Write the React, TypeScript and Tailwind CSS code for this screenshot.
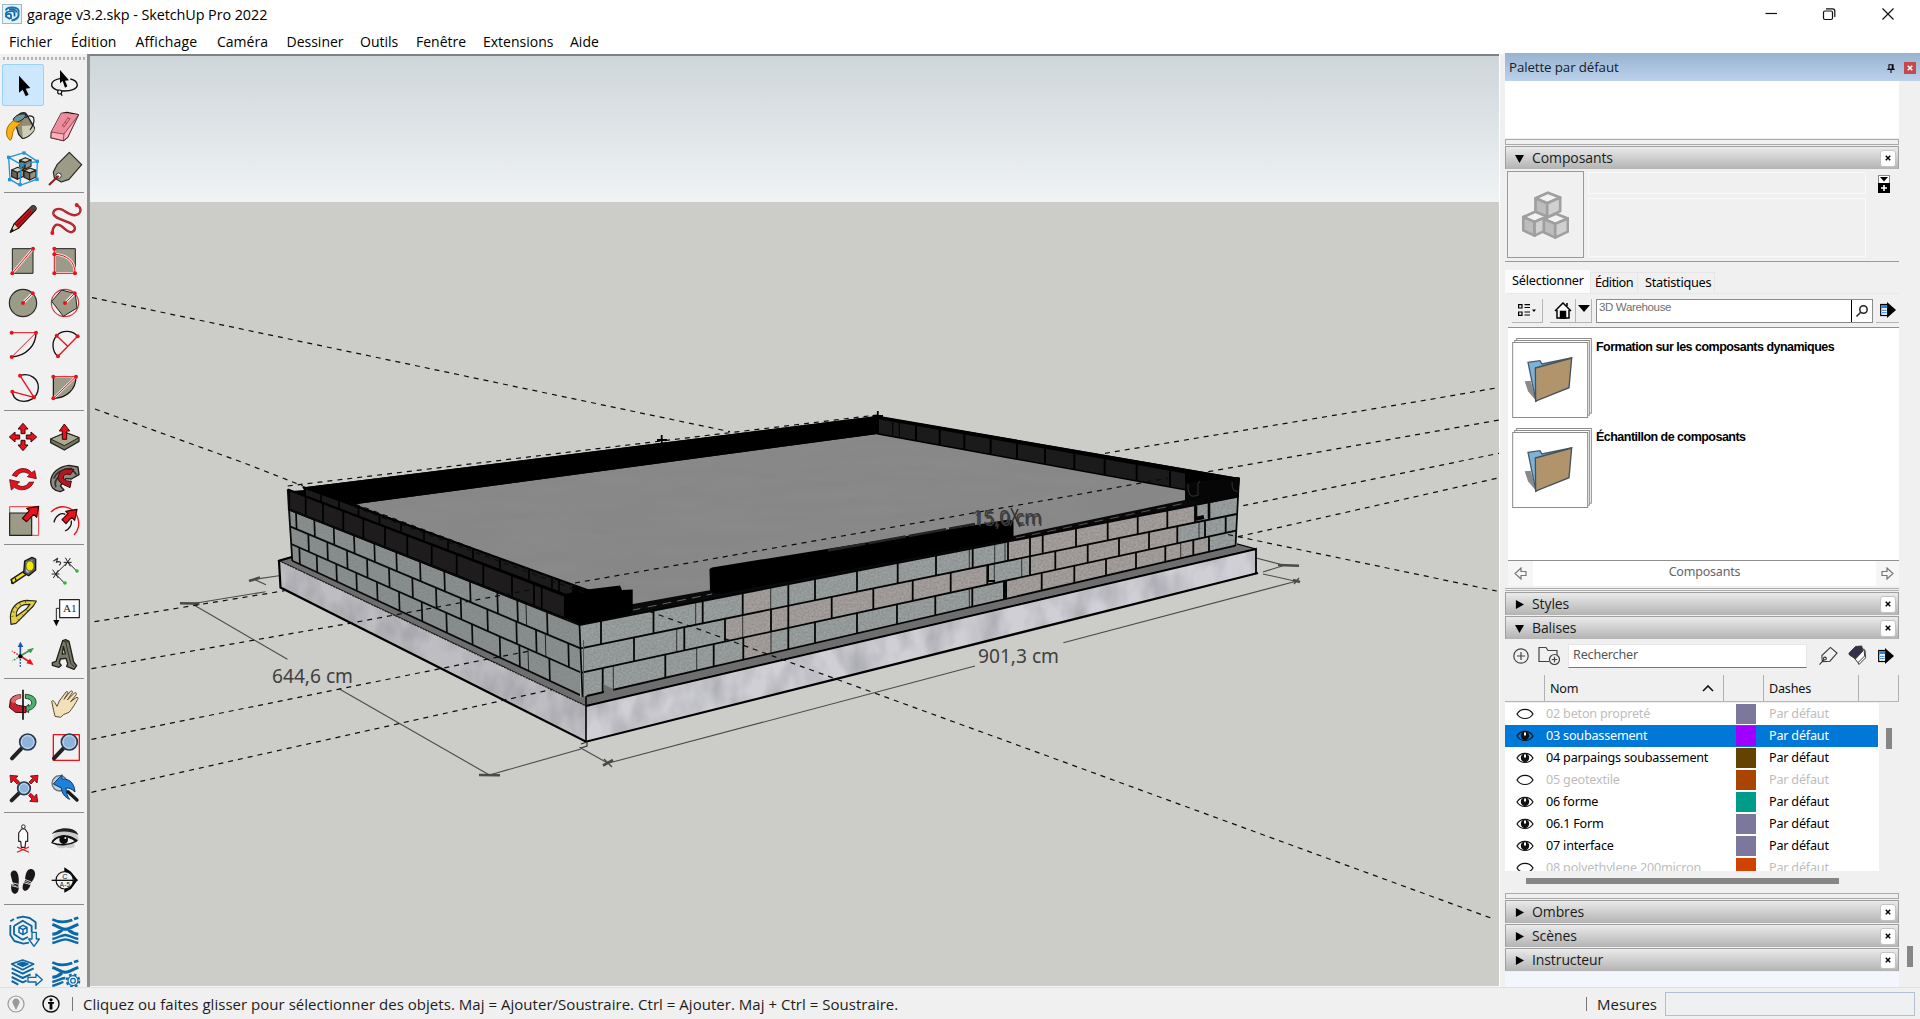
import React from "react";

const UI = "font-['Open_Sans','Noto_Sans',sans-serif]";
const TAH = "font-['Noto_Sans','Open_Sans',sans-serif] tracking-[-0.2px]";

/* ---------- Toolbar icons: every cell is a 42px square drawn at 3 units per pixel ---------- */

const R = "#e8121c";
const STONE = "#9c9b87";

function Cell({ x, y, active, children }: { x: number; y: number; active?: boolean; children: React.ReactNode }) {
  return (
    <div className={active ? "size-[42px] rounded-[2px] border border-[#99d1ff] bg-[#cce8ff]" : "size-[42px]"}>
      <svg viewBox={`${x} ${y} 126 126`} className={active ? "-m-px size-[42px]" : "size-[42px]"} strokeLinejoin="round" fill="none">
        {children}
      </svg>
    </div>
  );
}

const Dots = ({ p }: { p: number[][] }) => (
  <>
    {p.map(([x, y], i) => (
      <circle key={i} cx={x} cy={y} r="6" fill={R} />
    ))}
  </>
);

const Lens = ({ cx, cy, r, hx, hy }: { cx: number; cy: number; r: number; hx: number; hy: number }) => {
  const mx = cx + (hx - cx) * 0.42;
  const my = cy + (hy - cy) * 0.42;
  return (
    <>
      <path d={`M${mx} ${my}L${hx} ${hy}`} stroke="#222" strokeWidth="12" strokeLinecap="round" />
      <circle cx={cx} cy={cy} r={r} fill="#8fb4dc" stroke="#2b3a48" strokeWidth="5" />
      <circle cx={cx} cy={cy} r={r - 5} stroke="#c6dcf2" strokeWidth="3" />
    </>
  );
};

const Cube = ({ x, y, s, line, top, left, right, w }: { x: number; y: number; s: number; line: string; top: string; left: string; right: string; w: number }) => (
  <g stroke={line} strokeWidth={w} strokeLinejoin="round">
    <path d={`M${x} ${y - s}L${x + s} ${y - s * 0.6}L${x - s * 0.05} ${y - s * 0.15}L${x - s} ${y - s * 0.55}Z`} fill={top} />
    <path d={`M${x - s} ${y - s * 0.55}L${x - s * 0.05} ${y - s * 0.15}V${y + s}L${x - s} ${y + s * 0.55}Z`} fill={left} />
    <path d={`M${x - s * 0.05} ${y - s * 0.15}L${x + s} ${y - s * 0.6}V${y + s * 0.5}L${x - s * 0.05} ${y + s}Z`} fill={right} />
  </g>
);

const Sep = () => (
  <div className="col-span-2 h-2 pt-[2px]">
    <div className="ml-[2px] h-px w-20 bg-[#8d8d8d]" />
  </div>
);

function Toolbar() {
  return (
    <aside className="h-full w-[87px] shrink-0 overflow-hidden bg-[#f1f1f1] pl-[2px]">
      <div className="mt-[3px] ml-[1px] h-[3px] w-[82px] bg-[repeating-linear-gradient(90deg,#b4b4b4_0_2px,transparent_2px_4px)]" />
      <div className="mt-[4px] grid w-[84px] grid-cols-[42px_42px]">
        <Cell x={6} y={42} active>
          <path d="M57 77V128L68 119L77 139L86 134L77 116L91 114Z" fill="#000" />
        </Cell>
        <Cell x={132} y={42}>
          <path d="M182 85C165 88 154 95 155 106C157 117 174 123 193 123C215 123 232 116 232 105C231 95 222 89 211 87" stroke="#111" strokeWidth="4" />
          <circle cx="179" cy="126" r="6" fill="#f1f1f1" stroke="#111" strokeWidth="3.5" />
          <path d="M184 131L186 138" stroke="#111" strokeWidth="3.5" />
          <path d="M180 60V100L188 93L195 113L202 109L195 92L207 91Z" fill="#000" />
        </Cell>
        <Cell x={6} y={168}>
          <path d="M42 206L60 191C70 187 78 189 80 194L103 233C105 242 85 264 67 265L56 253Z" fill="#8f8d78" stroke="#1d1d1d" strokeWidth="4" />
          <path d="M66 228L99 226L103 238C96 252 82 262 68 264Z" fill="#cfcdb4" />
          <path d="M40 208C45 196 64 188 78 194C74 208 58 216 42 218Z" fill="#6d96a3" stroke="#1d1d1d" strokeWidth="3" />
          <path d="M76 204C82 196 96 195 101 203C104 216 96 232 90 240" stroke="#1d1d1d" strokeWidth="3.5" />
          <path d="M40 212C49 217 59 219 68 214C60 222 44 232 39 245C37 255 36 268 31 271C24 266 18 257 20 243C21 230 30 219 40 212Z" fill="#fbb116" stroke="#a36d00" strokeWidth="3" />
        </Cell>
        <Cell x={132} y={168}>
          <path d="M154 246L184 190L201 187L235 194L203 262L190 272L153 263Z" fill="#f69aa8" stroke="#2b1418" strokeWidth="3.5" />
          <path d="M184 190L235 194L204 250L154 246Z" fill="#ec8e9d" />
          <path d="M154 246L192 252L235 196L203 262L190 272L153 263Z" fill="#ffb0bc" stroke="#4a1f26" strokeWidth="2" />
          <path d="M192 252L190 272" stroke="#4a1f26" strokeWidth="2" />
          <path d="M205 202L186 229M211 205L191 232M202 204L210 207M193 217L201 220M187 226L194 230" stroke="#a84c62" strokeWidth="3" />
        </Cell>
        <Cell x={6} y={294}>
          <Cube x={76} y={340} s={17} w={3.5} line="#24211f" top="#d1cebd" left="#686457" right="#959280" />
          <Cube x={53} y={370} s={18} w={3.5} line="#24211f" top="#d1cebd" left="#686457" right="#959280" />
          <Cube x={90} y={372} s={18} w={3.5} line="#24211f" top="#d1cebd" left="#686457" right="#959280" />
          <path d="M26 322L72 308L112 334L64 344ZM26 322L30 388L60 406L110 388L112 334M64 344L60 406" stroke="#2494d4" strokeWidth="4" />
          {[[26, 322], [72, 309], [112, 334], [64, 344], [29, 389], [60, 404], [111, 388]].map(([a, b]) => (
            <rect key={`${a}-${b}`} x={a - 5} y={b - 5} width="10" height="10" fill="#2494d4" />
          ))}
        </Cell>
        <Cell x={132} y={294}>
          <path d="M160 366L172 343L208 307L245 344L207 388L184 396L163 384Z" fill={STONE} stroke="#262620" strokeWidth="3.5" />
          <circle cx="176" cy="377" r="8" fill="#fff" stroke="#333" strokeWidth="3" />
          <path d="M176 377L147 405" stroke="#8d1a1e" strokeWidth="6" />
        </Cell>
        <Sep />
        <Cell x={6} y={444}>
          <path d="M31 547L43 521L96 468C102 464 111 472 108 479L56 534Z" fill="#d9151c" stroke="#1c0c0c" strokeWidth="3.5" />
          <path d="M31 547L43 521L56 534Z" fill="#ecd9b4" stroke="#1c0c0c" strokeWidth="3" />
          <path d="M31 547L36 536L42 541Z" fill="#111" />
          <path d="M87 477L98 487L108 478C110 470 102 464 96 468Z" fill="#4c4440" />
          <path d="M50 527L93 484" stroke="#8c0d12" strokeWidth="5" />
        </Cell>
        <Cell x={132} y={444}>
          <path d="M157 549C158 528 168 520 180 526C194 534 205 551 216 546C228 541 228 529 214 521C198 511 162 506 160 491C159 475 180 473 192 482C207 492 222 501 235 492C246 484 242 470 230 465" stroke="#a81a22" strokeWidth="7" />
          <path d="M157 549C158 528 168 520 180 526C194 534 205 551 216 546C228 541 228 529 214 521C198 511 162 506 160 491C159 475 180 473 192 482C207 492 222 501 235 492C246 484 242 470 230 465" stroke="#e2575e" strokeWidth="1.5" />
          <Dots p={[[157, 549], [230, 465]]} />
        </Cell>
        <Cell x={6} y={570}>
          <rect x="37" y="596" width="62" height="74" fill={STONE} stroke="#222" strokeWidth="3" />
          <path d="M37 670L99 596" stroke="#f6e5e2" strokeWidth="8" />
          <path d="M37 670L99 596" stroke={R} strokeWidth="3" />
          <Dots p={[[37, 670], [99, 596]]} />
        </Cell>
        <Cell x={132} y={570}>
          <rect x="164" y="596" width="62" height="74" fill={STONE} stroke="#222" strokeWidth="3" />
          <path d="M163 596V670H225C226 636 200 613 163 613" stroke="#f6e5e2" strokeWidth="8" />
          <path d="M163 596V670H225C226 636 200 613 163 613" stroke={R} strokeWidth="3" />
          <Dots p={[[163, 596], [163, 613], [163, 670], [225, 670]]} />
        </Cell>
        <Cell x={6} y={696}>
          <circle cx="69" cy="759" r="41" fill={STONE} stroke="#2a2a22" strokeWidth="3.5" />
          <path d="M69 759L98 730" stroke="#f6e5e2" strokeWidth="9" />
          <path d="M69 759L98 730" stroke={R} strokeWidth="3" />
          <Dots p={[[69, 759], [98, 730]]} />
        </Cell>
        <Cell x={132} y={696}>
          <circle cx="195" cy="759" r="41" stroke="#d93a40" strokeWidth="3.5" />
          <path d="M155 754L185 720L226 731L231 774L190 799Z" fill={STONE} stroke="#222" strokeWidth="3" />
          <path d="M195 759L224 730" stroke="#f6e5e2" strokeWidth="9" />
          <path d="M195 759L224 730" stroke={R} strokeWidth="3" />
          <Dots p={[[195, 759], [224, 730]]} />
        </Cell>
        <Cell x={6} y={822}>
          <path d="M108 848C108 885 80 918 35 921" stroke="#111" strokeWidth="4" />
          <path d="M35 848H108L35 921" stroke={R} strokeWidth="3" />
          <Dots p={[[35, 848], [108, 848], [35, 921]]} />
        </Cell>
        <Cell x={132} y={822}>
          <path d="M174 919C157 906 153 876 170 857C188 838 220 841 233 860" stroke="#111" strokeWidth="4" />
          <path d="M174 919L233 859M170 857L203 889" stroke={R} strokeWidth="4" />
          <Dots p={[[174, 919], [233, 859], [170, 857]]} />
        </Cell>
        <Cell x={6} y={948}>
          <path d="M60 977C90 966 116 988 115 1013C113 1046 84 1059 58 1052C46 1048 38 1037 37 1025" stroke="#111" strokeWidth="4" />
          <path d="M60 977L102 1042L37 1025" stroke={R} strokeWidth="4" />
          <Dots p={[[60, 977], [102, 1042], [37, 1025]]} />
        </Cell>
        <Cell x={132} y={948}>
          <path d="M160 980H228C228 1018 200 1045 160 1045Z" fill={STONE} stroke="#111" strokeWidth="3.5" />
          <path d="M160 980H228L160 1045" stroke="#f6e5e2" strokeWidth="7" />
          <path d="M160 980H228L160 1045" stroke={R} strokeWidth="3" />
          <Dots p={[[160, 980], [228, 980], [160, 1045]]} />
        </Cell>
        <Sep />
        <Cell x={6} y={48}>
          {[0, 90, 180, 270].map((a) => (
            <path key={a} transform={`rotate(${a} 69 111)`} d="M69 70L84 87H75V101H63V87H54Z" fill={R} stroke="#3b0507" strokeWidth="3" />
          ))}
        </Cell>
        <Cell x={132} y={48}>
          <path d="M152 117L197 98L237 113V124L193 150L152 128Z" fill="#77765f" stroke="#25251d" strokeWidth="4" />
          <path d="M152 117L197 98L237 113L193 137Z" fill="#aaa992" stroke="#25251d" strokeWidth="3" />
          <path d="M193 72L209 93H200V118H187V93H178Z" fill={R} stroke="#3b0507" strokeWidth="3" />
        </Cell>
        <Cell x={6} y={174}>
          <path d="M37 226C49 203 79 198 95 218L104 212L109 236L82 230L89 224C76 212 58 214 50 230Z" fill={R} stroke="#6a0a0e" strokeWidth="2.5" />
          <path d="M101 246C92 270 61 276 43 262L34 270L29 239L59 246L50 253C63 264 81 260 87 247Z" fill={R} stroke="#6a0a0e" strokeWidth="2.5" />
        </Cell>
        <Cell x={132} y={174}>
          <path d="M152 247C152 220 176 199 207 196L234 201L237 224L214 237L198 236L181 258L192 270L181 275C163 273 153 264 152 247Z" fill="#8b8b84" stroke="#1f1f1c" strokeWidth="4" />
          <path d="M161 236C169 215 186 207 213 205L230 224M168 262C162 248 168 236 180 228" stroke="#33332e" strokeWidth="5" />
          <path d="M222 208L196 207C178 213 169 231 177 243C184 254 198 256 210 263L214 243C198 244 190 240 190 231C190 224 200 220 211 224Z" fill="#b3181e" stroke="#45090c" strokeWidth="3" />
        </Cell>
        <Cell x={6} y={300}>
          <rect x="29" y="320" width="87" height="86" stroke={R} strokeWidth="2.5" />
          <rect x="29" y="339" width="66" height="67" fill={STONE} stroke="#222" strokeWidth="3.5" />
          <path d="M116 319L110 352L101 343L80 365L67 355L88 332L80 325Z" fill={R} stroke="#2c0506" strokeWidth="3.5" />
        </Cell>
        <Cell x={132} y={300}>
          <path d="M153 336C180 309 219 319 232 350C241 371 235 393 222 405" stroke={R} strokeWidth="4" />
          <path d="M162 367C167 345 184 337 196 343M214 362C216 374 209 387 195 393" stroke="#111" strokeWidth="4" />
          <path d="M231 328L224 361L215 352L198 371L186 359L204 341L197 334Z" fill={R} stroke="#2c0506" strokeWidth="3.5" />
        </Cell>
        <Sep />
        <Cell x={6} y={450}>
          <path d="M33 539L71 514L78 524L38 551Z" fill="#f2e31b" stroke="#1b1b12" strokeWidth="4" />
          <path d="M74 483L96 472L107 477V510L86 527L71 519Z" fill="#5c5f61" stroke="#161616" strokeWidth="4" />
          <path d="M79 486L97 480V509L83 519L77 514Z" fill="#b1b5b8" />
          <ellipse cx="90" cy="498" rx="12" ry="15" fill="#f5e60a" stroke="#39382a" strokeWidth="2" />
          <path d="M35 541V551M46 534L49 545" stroke="#1b1b12" strokeWidth="4" />
        </Cell>
        <Cell x={132} y={450}>
          <path d="M167 522L203 486M167 522L193 549M203 486L230 513M158 509L175 534M155 522H178M175 510L160 534M191 487H215M196 473L211 499M211 474L195 498" stroke="#222" strokeWidth="3" />
          <path d="M160 484L173 475L169 487C180 481 187 489 177 496" stroke="#333" strokeWidth="3.5" />
          <circle cx="195" cy="549" r="5.5" fill="#35b53a" />
          <circle cx="231" cy="513" r="5.5" fill="#35b53a" />
        </Cell>
        <Cell x={6} y={576}>
          <path
            fillRule="evenodd"
            d="M33 673L31 650C33 622 52 603 80 601L109 603L100 618L48 670ZM49 649C46 633 58 617 74 614L90 613L78 628Z"
            fill="#e3cf45"
            stroke="#27260f"
            strokeWidth="3.5"
          />
          <path d="M34 650L41 648M37 634L44 637M45 620L51 625M58 608L62 615M76 603L77 609M52 656L58 662M66 643L72 649M80 630L86 636" stroke="#3c3a10" strokeWidth="2" />
        </Cell>
        <Cell x={132} y={576}>
          <path d="M179 625H169V668" stroke="#222" strokeWidth="3" />
          <path d="M160 660H178L169 679Z" fill="#000" />
          <rect x="179" y="599" width="59" height="54" fill="#fff" stroke="#222" strokeWidth="3.5" />
          <text x="189" y="636" fontSize="32" fill="#222" fontFamily="Liberation Serif, serif" textLength="41" lengthAdjust="spacingAndGlyphs">A1</text>
        </Cell>
        <Cell x={6} y={702}>
          <path d="M61 768V736" stroke="#1b56a4" strokeWidth="5" />
          <path d="M61 725L70 741H53Z" fill="#1b56a4" />
          <path d="M61 768V802" stroke="#1b56a4" strokeWidth="4" strokeDasharray="5 4" />
          <path d="M61 768L90 751" stroke="#3b9a46" strokeWidth="5" />
          <path d="M102 743L92 760L81 749Z" fill="#3b9a46" />
          <path d="M61 768L37 783" stroke="#3b9a46" strokeWidth="4" strokeDasharray="5 4" />
          <path d="M61 768L89 786" stroke={R} strokeWidth="5" />
          <path d="M101 795L79 790L90 776Z" fill={R} />
          <path d="M61 768L36 753" stroke={R} strokeWidth="4" strokeDasharray="5 4" />
          <circle cx="61" cy="769" r="6.5" fill="#000" />
        </Cell>
        <Cell x={132} y={702}>
          <path fillRule="evenodd" d="M188 722L197 719L207 724L221 786L230 797L222 808L200 799L203 791L198 775L181 777L178 789L184 796L177 802L157 796V788L168 784ZM187 762L196 761L190 739Z" fill="#77776a" stroke="#222219" strokeWidth="4" />
          <path d="M188 722L197 726L212 790L222 800M197 726L206 724" stroke="#222219" strokeWidth="2.5" />
        </Cell>
        <Sep />
        <Cell x={6} y={12}>
          <path d="M76 43C97 44 109 53 108 68C107 80 98 88 86 91V98L70 87L86 73V79C93 76 96 71 95 66C92 59 86 56 76 55Z" fill="#50b072" stroke="#164c2a" strokeWidth="3" />
          <path d="M62 44C42 45 29 53 30 69L28 82L46 97L78 98V80L60 77C46 75 42 68 46 62C50 57 56 55 62 54Z" fill="#c3242d" stroke="#4a090d" strokeWidth="3" />
          <path d="M32 64C36 50 48 45 62 44V54C50 57 43 62 44 71Z" fill="#df6a67" />
          <path d="M69 29V119" stroke="#111" strokeWidth="5" />
        </Cell>
        <Cell x={132} y={12}>
          <path d="M165 109L161 92L155 64C157 60 161 62 164 67L171 79L178 63L198 36C201 33 205 35 203 40L192 58L211 34C215 31 219 34 217 38L202 60L223 39C227 36 231 40 229 44L212 65L228 53C233 50 236 54 233 58C226 70 217 86 207 97L190 104L182 112Z" fill="#f3dfb9" stroke="#5d4c32" strokeWidth="3" />
        </Cell>
        <Cell x={6} y={138}>
          <Lens cx={83} cy={186} r={24} hx={36} hy={235} />
        </Cell>
        <Cell x={132} y={138}>
          <rect x="160" y="164" width="78" height="77" stroke={R} strokeWidth="4" />
          <Lens cx={208} cy={186} r={24} hx={162} hy={235} />
        </Cell>
        <Cell x={6} y={264}>
          <path d="M30 286L54 288L47 295L59 306L52 313L40 301L33 309Z" fill={R} stroke="#5d0a0d" strokeWidth="2.5" />
          <path d="M114 286L91 288L98 295L87 306L93 312L104 301L111 309Z" fill={R} stroke="#5d0a0d" strokeWidth="2.5" />
          <path d="M113 366L89 364L96 357L86 347L92 340L103 350L110 342Z" fill={R} stroke="#5d0a0d" strokeWidth="2.5" />
          <Lens cx={72} cy={325} r={19} hx={35} hy={361} />
        </Cell>
        <Cell x={132} y={264}>
          <circle cx="179" cy="310" r="23" fill="#c1d0dc" stroke="#62717c" strokeWidth="4" />
          <path d="M160 312L186 284V297C207 297 222 305 225 336C215 326 206 323 198 324C199 340 202 350 209 358C195 352 185 340 184 324Z" fill="#1c82de" stroke="#0e3762" strokeWidth="3" />
          <path d="M204 335L231 360" stroke="#1b1b1b" strokeWidth="10" strokeLinecap="round" />
        </Cell>
        <Sep />
        <Cell x={6} y={414}>
          <path d="M51 501L87 517M87 501L51 517" stroke={R} strokeWidth="3.5" />
          <circle cx="70" cy="440" r="5.5" fill="#fff" stroke="#222" strokeWidth="3" />
          <path d="M65 447H75L83 459V484H77L75 502H64L62 484H56V459Z" fill="#fff" stroke="#222" strokeWidth="3.5" />
        </Cell>
        <Cell x={132} y={414}>
          <path d="M159 470C168 452 190 446 213 452C227 456 235 466 237 480L221 490C232 500 214 510 198 502C181 510 164 500 168 488Z" fill="#a8a8a8" opacity=".5" />
          <path d="M155 463C164 446 195 440 217 448C228 452 233 459 235 465C217 453 176 450 155 463Z" fill="#222" />
          <path d="M156 488C169 467 201 462 228 484C207 496 176 498 156 488Z" fill="#eee" stroke="#111" strokeWidth="4.5" />
          <path d="M158 484C171 466 205 460 232 483" stroke="#111" strokeWidth="5" />
          <circle cx="191" cy="479" r="13" fill="#0b0b0b" />
          <circle cx="196" cy="474" r="3" fill="#eee" />
        </Cell>
        <Cell x={6} y={540}>
          <path d="M32 585C31 572 43 568 50 575C57 584 58 604 54 621L39 612Z" fill="#1b1717" />
          <path d="M34 613L56 620C57 635 50 642 43 641C34 639 32 625 34 613Z" fill="#1b1717" />
          <path d="M85 569C97 562 107 572 105 585C103 596 97 604 91 610L75 602C75 590 78 575 85 569Z" fill="#1b1717" />
          <path d="M74 604L92 612C90 625 80 634 73 632C65 629 67 615 74 604Z" fill="#1b1717" />
          <path d="M35 608L55 613M35 617L55 622M74 598L94 606M72 608L92 614" stroke="#fff" strokeWidth="2.5" />
        </Cell>
        <Cell x={132} y={540}>
          <path d="M193 562L213 575L233 600L213 627L193 638V626L224 600L193 575Z" fill="#000" />
          <circle cx="194" cy="601" r="26" fill="#f4f4f4" stroke="#111" strokeWidth="3.5" />
          <path d="M155 601H233" stroke="#111" strokeWidth="4" />
          <text x="187" y="596" fontSize="22" fill="#222" fontFamily="Liberation Sans, sans-serif">C</text>
          <text x="179" y="620" fontSize="19" fill="#222" fontFamily="Liberation Sans, sans-serif" textLength="31">A-5</text>
        </Cell>
        <Sep />
        <Cell x={6} y={690}>
          <g stroke="#0b67a8" strokeWidth="5.5">
            <path d="M50 714L69 710L89 714L107 727V748M31 735V765L43 783L70 791L87 788M31 724L42 717" />
            <path d="M42 738L68 722L95 738V756M42 738V763L68 779L84 771" />
            <path d="M57 742L69 736L81 742V757L69 764L57 757ZM57 742L69 749L81 742M69 749V764" strokeWidth="4.5" />
            <path d="M96 757H109V777H118L102 799L86 777H96Z" fill="#f1f1f1" strokeWidth="4" />
          </g>
        </Cell>
        <Cell x={132} y={690}>
          <g stroke="#0b67a8" strokeWidth="8">
            <path d="M157 718C176 728 192 729 217 720M222 717L235 713" strokeWidth="8" />
            <path d="M157 733C174 739 184 748 196 748C208 748 218 739 235 733M157 763C170 762 178 757 186 750M235 763C222 762 214 757 206 750" strokeWidth="9" />
            <path d="M157 777C173 774 185 765 196 765C207 765 216 773 235 777M157 789C172 786 184 778 196 778C208 778 220 786 235 789" strokeWidth="7" />
          </g>
        </Cell>
        <Cell x={6} y={816}>
          <g stroke="#0b67a8" strokeWidth="5">
            <path d="M35 852L68 840L101 852L68 869Z" />
            <path d="M53 852L68 847L84 852L68 859Z" fill="#0b67a8" />
            <path d="M35 865L68 881L101 865M35 878L68 894L92 883M35 891L68 907L80 902M35 903L55 914" strokeWidth="6" />
            <path d="M84 892H108V882L127 899L108 916V906H84Z" fill="#f1f1f1" strokeWidth="4" />
          </g>
        </Cell>
        <Cell x={132} y={816}>
          <g stroke="#0b67a8" strokeWidth="8">
            <path d="M157 847C176 857 192 858 217 849M222 846L235 842" strokeWidth="8" />
            <path d="M157 862C174 868 184 877 196 877C208 877 218 868 235 862M157 892C170 891 178 886 186 879" strokeWidth="9" />
            <path d="M157 906C173 903 182 895 196 894M157 918C168 915 179 910 190 906" strokeWidth="7" />
            <circle cx="219" cy="902" r="19" strokeWidth="6" strokeDasharray="8 7" />
            <circle cx="219" cy="902" r="15" fill="#f1f1f1" strokeWidth="3.5" />
            <circle cx="219" cy="902" r="7" strokeWidth="3.5" />
          </g>
        </Cell>
      </div>
    </aside>
  );
}

/* ---------- 3D view ---------- */

type Line = [number, number, number, number];
const at = ([x1, y1, x2, y2]: Line, x: number) => y1 + ((y2 - y1) * (x - x1)) / (x2 - x1);

const leftLines: Line[] = [
  [289, 509.3, 579.3, 625],
  [290.5, 526.7, 580.5, 648.3],
  [291.3, 544, 581.5, 672.7],
  [292.3, 560.7, 582.3, 696],
];
const leftJoints = [
  [296, 314.3, 333.7, 354, 374.3, 396.3, 420, 444.3, 470, 497.3, 517.3, -526, 547],
  [308.3, 327.3, 347, 367, 389, 412.3, 436, 460.7, 487.3, 516.3, 536, -545.3, 568.3],
  [299.3, 316.7, 336.3, 356.3, 377, 399, 421.7, 446.3, 472, 499.7, 519.3, -528, 549.3],
];
const frontLines: Line[] = [
  [579.3, 625, 1238.3, 496.7],
  [580.7, 648.3, 1236.7, 514],
  [581.7, 672.7, 1236, 530.7],
  [586.7, 696, 1235.3, 545.7],
];
/* negative values are hairline joints */
const frontJoints = [
  [601, 653.5, -695.7, 702.7, 742.7, -770.7, 788.3, 815, 857, 897.7, 936, -969.3, 972.7, -994.7, -1005, 1008, 1030, 1042.7, 1076, 1107.7, 1137.7, 1167.3, 1195, 1209],
  [634, -676.7, 684.3, 725, -742.7, 771, 788.3, 831.7, 873.3, 912.7, 950.7, 987.3, -994.3, -1021.7, 1030, 1055.3, 1087.7, 1119, 1149, 1177.3, -1199, 1205, 1225.7],
  [602.7, -613.3, 665.3, -696.7, 713.7, 743.3, -771, 788.3, 815, 857, 897, 935.3, -969.3, 972.3, 1005, 1041.7, 1074.3, 1106, 1136, 1165.3, -1180.7, 1193.3, 1209],
];
const pinkSpans = [
  [[742.7, 770.7], [1008, 1195]],
  [[725, 987.3], [1030, 1177.3]],
  [[743.3, 771], [1008, 1209]],
];

const band = (a: Line, b: Line, x1: number, x2: number) =>
  `${x1},${at(a, x1)} ${x2},${at(a, x2)} ${x2},${at(b, x2)} ${x1},${at(b, x1)}`;

const darkTop: Line = [287.7, 489.5, 565, 595.7];
const darkBottom: Line = [287.7, 509, 565, 618.5];
const darkJoints = [305.7, 323, 343.3, 363.3, 385, 407.3, 431.7, 456.7, 483.3, 512, 534, 541.7];
const capTop: Line = [303, 488, 590, 592];
const capBottom: Line = [303, 495, 575, 597];
const backTop: Line = [877, 419, 1239, 483];
const backBottom: Line = [877, 433, 1185, 489];
const backJoints = [-892.7, -899.3, 916, 939.7, 964.3, 990.7, 1017, 1045, 1074.3, 1104.7, 1136.7, 1170];

const guides = [
  "M92 297.6L730 431.7",
  "M95 409L245 463.3L303 486",
  "M640 608L770 655L1001.7 739.3L1495 919.5",
  "M287.7 486L877 415",
  "M94.5 621.7L284.7 590.7",
  "M91.5 668.7L349.8 623.3L535 589",
  "M91.5 739.3L478 661L529.6 651",
  "M91.5 792.3L552.6 689.3",
  "M575 583L1070 496L1168 478",
  "M1208.3 471.7L1499 420",
  "M1105 453.3L1426.7 400L1496 388",
  "M1243.3 505.7L1499 453.3",
  "M1228 534.5L1238 536.7L1496.7 591",
  "M1238 536.7L1496.7 478.3",
  "M355 504L588 591",
  "M354 507L584 593",
];

const dims: Line[] = [
  [250, 580, 279, 575.7],
  [254, 579.3, 266, 584.7],
  [195, 603.3, 265.6, 591.7],
  [194, 605, 287.4, 659.3],
  [339.4, 689, 489.4, 775],
  [489.4, 775, 581, 749],
  [579.4, 747.3, 608, 763.3],
  [608, 763.3, 975, 666],
  [1063.3, 642.7, 1298, 580.7],
  [1263, 574, 1298, 581.7],
  [1256, 558, 1283, 565],
  [1263, 572, 1283, 565.7],
];
const ticks: Line[] = [
  [249, 581, 260, 577.5],
  [180, 603.3, 199.5, 603.6],
  [479, 775, 500, 775.2],
  [603, 765.5, 613, 760],
  [1278, 565, 1299, 565.8],
  [1293, 580, 1300, 582],
];

function Model() {
  return (
    <svg viewBox="90 56 1409 930" className="block h-[930px] w-[1409px]" fill="none">
      <defs>
        <linearGradient id="sky" x1="0" y1="0" x2="0" y2="1">
          <stop offset="0" stopColor="#ced6da" />
          <stop offset="1" stopColor="#f0f3f4" />
        </linearGradient>
        <filter id="slabGrain" x="0" y="0" width="100%" height="100%">
          <feTurbulence type="fractalNoise" baseFrequency="0.012 0.09" numOctaves="2" seed="4" />
          <feColorMatrix values="0 0 0 0 0.3  0 0 0 0 0.3  0 0 0 0 0.3  0.4 0 0 0 -0.14" />
          <feComposite in2="SourceGraphic" operator="in" />
        </filter>
        <filter id="concrete" x="0" y="0" width="100%" height="100%" colorInterpolationFilters="sRGB">
          <feTurbulence type="fractalNoise" baseFrequency="0.04 0.025" numOctaves="3" seed="9" />
          <feColorMatrix values="0 0 0 0 0.42  0 0 0 0 0.42  0 0 0 0 0.45  0.7 0 0 0 -0.25" />
          <feComposite in2="SourceGraphic" operator="in" />
        </filter>
        <filter id="speckle" x="0" y="0" width="100%" height="100%" colorInterpolationFilters="sRGB">
          <feTurbulence type="fractalNoise" baseFrequency="0.5" numOctaves="2" seed="2" />
          <feColorMatrix values="0 0 0 0 0.35  0 0 0 0 0.37  0 0 0 0 0.37  0.6 0 0 0 -0.18" />
          <feComposite in2="SourceGraphic" operator="in" />
        </filter>
      </defs>
      <rect x="90" y="56" width="1409" height="146.5" fill="url(#sky)" />
      <rect x="90" y="202" width="1409" height="784" fill="#cccdc8" />

      <g stroke="#4a4a48" strokeWidth="1.1">
        {dims.map((l) => (
          <path key={l.join()} d={`M${l[0]} ${l[1]}L${l[2]} ${l[3]}`} />
        ))}
      </g>
      <g stroke="#4a4a48" strokeWidth="2.6">
        {ticks.map((l) => (
          <path key={l.join()} d={`M${l[0]} ${l[1]}L${l[2]} ${l[3]}`} />
        ))}
        <path d="M604 759L612 767M1294 584L1299 578" strokeWidth="1.4" />
      </g>

      {/* footing */}
      <path d="M279 560.7L292 557L582 696L1235 545.5L1237 544L1256 549L586 706Z" fill="#6e6e6e" stroke="#000" strokeWidth="1.2" />
      <path d="M279 560.7L586 706V741.7L280.5 587.5Z" fill="#bdbdc2" />
      <path d="M586 706L1256 549L1255 573.5L586 741.7Z" fill="#cfcfd5" />
      <path d="M279 560.7L586 706L1256 549L1255 573.5L586 741.7L280.5 587.5Z" fill="#000" filter="url(#concrete)" />
      <path d="M279 560.7L586 706" stroke="#222" strokeWidth="1.2" strokeDasharray="2 1" />
      <path d="M586 706L1256 549V573.5" stroke="#000" strokeWidth="1.8" />
      <path d="M292 557L279 560.7L280.5 587.5L586 741.7L1258 573" stroke="#000" strokeWidth="2.2" />
      <path d="M586 640V742" stroke="#000" strokeWidth="1.6" />
      <path d="M581 744L587 742V746L581 748" stroke="#333" strokeWidth="1.2" />

      {/* slab */}
      <path d="M302 487.5L877 416L1239.5 478L1238 500L580 626L565 600Z" fill="#0a0a0a" />
      <path d="M355 504.3L877.3 434L1185 489V500L1013 536L633 604L588 592Z" fill="#878787" />
      <path d="M355 504.3L877.3 434L1185 489V500L1013 536L633 604L588 592Z" fill="#000" filter="url(#slabGrain)" />

      {/* rear walls */}
      <path d="M302 487.5L877 416L877.5 434L355 504.3L330 505Z" fill="#000" />
      <path d="M877 415.5L1239.5 478L1238.5 497L1209 503L1185 490.5L877 434.5Z" fill="#000" />
      <polygon points={band(backTop, backBottom, 879, 1185)} fill="#1b1b1b" />
      {backJoints.map((j) => {
        const x = Math.abs(j);
        return <path key={x} d={`M${x} ${at(backTop, x)}V${at(backBottom, x)}`} stroke="#000" strokeWidth={j < 0 ? 1 : 2} />;
      })}

      {/* side wall */}
      {leftLines.slice(0, 3).map((l, i) => (
        <polygon key={i} points={band(l, leftLines[i + 1], 290 + i, 581.5)} fill="#8a908f" />
      ))}
      <path d="M287.7 489.3L303 487L590 591L566 620L289 510Z" fill="#000" />
      <path d="M287.7 488L302 486.5L304 490L292 491Z" fill="#cccdc8" />
      <polygon points={band(capTop, capBottom, 306, 572)} fill="#1b1b1b" />
      {[321, 339, 358.5, 379.5, 401, 424, 448, 473, 500, 529, 552, 559].map((x) => (
        <path key={x} d={`M${x} ${at(capTop, x)}V${at(capBottom, x)}`} stroke="#000" strokeWidth="1.6" />
      ))}
      <path d="M303 487L590 591" stroke="#000" strokeWidth="2" />
      <polygon points={band(darkTop, darkBottom, 289, 565)} fill="#1e1c1d" stroke="#000" strokeWidth="2.2" />
      {darkJoints.map((x) => (
        <path key={x} d={`M${x} ${at(darkTop, x)}V${at(darkBottom, x)}`} stroke="#000" strokeWidth="1.7" />
      ))}
      <path d="M290 510L580 625L582 697L292 561Z" fill="#000" filter="url(#speckle)" opacity=".6" />
      <g stroke="#0a0a0a">
        {leftJoints.map((row, i) =>
          row.map((j) => {
            const x = Math.abs(j);
            return (
              <path key={`${i}-${x}`} d={`M${x} ${at(leftLines[i], x)}L${x + 0.6} ${at(leftLines[i + 1], x)}`} strokeWidth={j < 0 ? 0.8 : 1.7} />
            );
          }),
        )}
        {leftLines.map((l) => (
          <path key={l[1]} d={`M${l[0]} ${l[1]}L${l[2]} ${l[3]}`} strokeWidth="1.8" />
        ))}
        <path d="M287.7 489.3L292.3 561" strokeWidth="1.8" />
      </g>

      {/* front wall */}
      {frontLines.slice(0, 3).map((l, i) => (
        <g key={i}>
          <polygon points={band(l, frontLines[i + 1], 580, 1237)} fill="#9ca2a1" />
          {pinkSpans[i].map(([a, b]) => (
            <polygon key={a} points={band(l, frontLines[i + 1], a, b)} fill="#a8a19f" />
          ))}
        </g>
      ))}
      <polygon points="580,625 1238,497 1235,546 583,697" fill="#000" filter="url(#speckle)" />
      <g stroke="#050505">
        {frontJoints.map((row, i) =>
          row.map((j) => {
            const x = Math.abs(j);
            return (
              <path key={`${i}-${x}`} d={`M${x} ${at(frontLines[i], x)}V${at(frontLines[i + 1], x)}`} strokeWidth={j < 0 ? 0.7 : 1.8} />
            );
          }),
        )}
        {frontLines.map((l) => (
          <path key={l[1]} d={`M${l[0]} ${l[1]}L${l[2]} ${l[3]}`} strokeWidth="1.8" />
        ))}
        <path d="M579.5 625L582.5 697M1239 478L1235.5 546" strokeWidth="1.7" />
        <path d="M583.5 640V698" stroke="#555" strokeWidth="1" />
        <path d="M1005 581V599" strokeWidth="4" />
        <path d="M1195 519L1204 517" strokeWidth="4" />
        <path d="M1196 506V519M1209 501V518" strokeWidth="2.6" />
        <path d="M988 564V581L995 581" strokeWidth="2" />
      </g>
      <path d="M603.7 684.5L613.3 689V691.5L604 694Z" fill="#6e6e6e" />

      {/* upper edge of the front wall */}
      <path d="M633 610L712 594" stroke="#666" strokeWidth="1" strokeDasharray="9 6" />
      <path d="M1016 538L1188 502.5" stroke="#555" strokeWidth="1" strokeDasharray="9 7" />

      {/* dark blocks */}
      <path d="M565 594L583 590L620 585.5L622 590L632.7 589.5V613L580 625L565 618.5Z" fill="#000" />
      <path d="M709.5 569L712 567.5L1009 519.5L1013.5 521V539L718 594.5L710 591Z" fill="#000" />
      <path d="M828 550.5L975 524" stroke="#242424" strokeWidth="2.4" strokeDasharray="38 3" />
      <path d="M1185 483L1239.5 477L1238.5 497L1209 503L1185 500Z" fill="#060606" />
      <path d="M1188 484C1188 496 1191 498 1198 495V484L1200 481M1232 482C1232 490 1235 492 1238 491" stroke="#2b2b2b" strokeWidth="1.2" />

      <g stroke="#0c0c0c" strokeWidth="1.2" strokeDasharray="5 5">
        {guides.map((d) => (
          <path key={d} d={d} />
        ))}
      </g>
      <path d="M657 440H667M661.7 435V445M872.5 416H883M877.8 411V421" stroke="#000" strokeWidth="1.8" />

      <g fill="#40403f" fontFamily="Noto Sans, Open Sans, sans-serif" fontSize="19">
        <text x="272" y="682.5" textLength="81" lengthAdjust="spacingAndGlyphs">644,6 cm</text>
        <text x="978" y="663" textLength="81" lengthAdjust="spacingAndGlyphs">901,3 cm</text>
        <g fill="#3d3d3d">
          <text x="972" y="524" textLength="70" lengthAdjust="spacingAndGlyphs">15,0 cm</text>
          <text x="974" y="525.5" textLength="69" lengthAdjust="spacingAndGlyphs">15,0 cm</text>
        </g>
        <path d="M1011 508L1020 527M1018 509L1010 526" stroke="#333" strokeWidth="1.6" />
      </g>
    </svg>
  );
}

/* ---------- Right tray ---------- */

const CloseBox = () => (
  <span className="flex h-[17px] w-4 items-center justify-center rounded-[3px] border border-[#c4c4c4] bg-white">
    <svg viewBox="0 0 8 8" className="size-[6px]" stroke="#000" strokeWidth="1.9">
      <path d="M1 1L7 7M7 1L1 7" />
    </svg>
  </span>
);

function Header({ title, open }: { title: string; open?: boolean }) {
  return (
    <div className="mb-px flex h-[23px] items-center border border-b-0 border-[#9f9f9f] bg-linear-to-b from-[#ebebeb] to-[#b3b3b3] pr-[2px] pl-[9px]">
      <svg viewBox="0 0 10 10" className="size-[9px]" fill="#000">
        {open ? <path d="M0 1H10L5 10Z" /> : <path d="M1 0L10 5L1 10Z" />}
      </svg>
      <span className={`${UI} ml-[8px] flex-1 text-[14px] leading-[20px] tracking-[-0.1px] text-[#1a1a1a]`}>{title}</span>
      <CloseBox />
    </div>
  );
}

const Splitter = () => <div className="mb-px h-[6px] border border-[#a9a9a9] bg-[#f0f0f0]" />;

const DetailArrow = () => (
  <svg viewBox="0 0 16 16" className="size-4 shrink-0">
    <path d="M7 0L16 8L7 16Z" fill="#000" />
    <rect x=".7" y="2.5" width="7" height="11" fill="#fff" stroke="#000" strokeWidth="1.2" />
    <rect x="1.3" y="3.1" width="5.8" height="3" fill="#2f7fd8" />
    <path d="M2 8.3H6.7M2 10.7H6.7" stroke="#2f7fd8" strokeWidth="1" />
  </svg>
);

function Folder({ label }: { label: string }) {
  return (
    <div className="flex h-[90px]">
      <svg viewBox="0 0 240 240" className="size-20 shrink-0" strokeLinejoin="miter">
        <g fill="#fff" stroke="#8c8c8c" strokeWidth="3">
          <rect x="14" y="1.5" width="224" height="224" />
          <rect x="8" y="7.5" width="224" height="224" />
          <rect x="2" y="13.5" width="225" height="225" />
        </g>
        <path d="M38 130L56 128L72 188L48 160Z" fill="#8a8a8a" />
        <path d="M48 73L84 68L90 78L178 60L150 120L72 190Z" fill="#7db3d8" stroke="#44596b" strokeWidth="4" />
        <path d="M70 90L179 60L171 149L71 189Z" fill="#b1946b" stroke="#44525c" strokeWidth="4" />
      </svg>
      <span className="mt-[2px] ml-[4px] font-['Liberation_Sans',Arial,sans-serif] text-[12.5px] leading-[15px] font-bold tracking-[-0.52px] text-black">{label}</span>
    </div>
  );
}

const EyeGlyph = ({ open }: { open: boolean }) => (
  <svg viewBox="0 0 18 14" className="h-[14px] w-[18px]" fill="none" stroke="#111" strokeWidth="1.2">
    <path d="M1 7C4.5 .9 13.5 .9 17 7C13.5 13 4.5 13 1 7Z" fill="#fff" fillOpacity={open ? 0 : 1} />
    {open && (
      <>
        <circle cx="9" cy="6.8" r="3.6" fill="#111" />
        <rect x="8" y="3.5" width="2" height="3" fill="#fff" stroke="none" />
      </>
    )}
  </svg>
);

const tags = [
  { name: "02 beton propreté", color: "#7b789c", on: false },
  { name: "03 soubassement", color: "#9f00ff", on: true, sel: true },
  { name: "04 parpaings soubassement", color: "#664200", on: true },
  { name: "05 geotextile", color: "#a94500", on: false },
  { name: "06 forme", color: "#009c8b", on: true },
  { name: "06.1 Form", color: "#7b789c", on: true },
  { name: "07 interface", color: "#7b789c", on: true },
  { name: "08 polyethylene 200micron", color: "#cf4200", on: false },
];

function Tray() {
  return (
    <aside className="flex h-[933px] w-[421px] shrink-0 flex-col border-l border-white bg-[#f0f0f0] pl-[5px]">
      <div className="-mt-px flex h-[28px] shrink-0 items-center bg-linear-to-b from-[#98b3d0] to-[#bcd1eb] pt-[2px] pr-[4px] pl-[4px]">
        <span className={`${UI} flex-1 text-[13.3px] tracking-[-0.1px] text-[#15202b]`}>Palette par défaut</span>
        <svg viewBox="0 0 9 11" className="mr-[9px] h-[9px] w-[8px]" fill="none" stroke="#000" strokeWidth="1.3">
          <path d="M2 6V1H7V6M6 1V6M0 6.6H9M4.5 7V11" />
        </svg>
        <span className="flex size-[12px] items-center justify-center bg-[#c4494d]">
          <svg viewBox="0 0 8 8" className="size-[6px]" stroke="#fff" strokeWidth="2">
            <path d="M1 1L7 7M7 1L1 7" />
          </svg>
        </span>
      </div>
      <div className="flex min-h-0 flex-1">
        <div className="flex w-[394px] shrink-0 flex-col">
          <div className="h-[57px] shrink-0 bg-white" />
          <div className="h-px" />
          <Splitter />
          <Header title="Composants" open />
          <div className="flex h-[92px] shrink-0 items-start border-b border-[#9a9a9a] pt-px pl-[2px]">
            <div className="flex h-[87px] w-[77px] items-center justify-center border border-[#999]">
              <svg viewBox="0 0 140 144" className="h-12 w-[47px]">
                <Cube x={77} y={42} s={37} w={8} line="#9f9f9f" top="#f3f3f3" left="#bdbdbd" right="#d0d0d0" />
                <Cube x={39} y={98} s={36} w={8} line="#9f9f9f" top="#f3f3f3" left="#bdbdbd" right="#d0d0d0" />
                <Cube x={101} y={104} s={36} w={8} line="#9f9f9f" top="#f3f3f3" left="#bdbdbd" right="#d0d0d0" />
              </svg>
            </div>
            <div className="mt-[1px] ml-[4px] w-[278px]">
              <div className="h-[22px] border border-[#f9f9f9]" />
              <div className="mt-[4px] h-[59px] border border-[#f9f9f9]" />
            </div>
            <svg viewBox="0 0 12 18" className="mt-[4px] ml-[12px] h-[18px] w-3">
              <rect x=".5" y=".5" width="11" height="17" fill="#fff" stroke="#888" />
              <path d="M2 2H10L6 6.5Z" />
              <rect y="8" width="12" height="10" />
              <path d="M3 13H9M6 10V16" stroke="#fff" strokeWidth="1.6" />
            </svg>
          </div>
          <div className={`${TAH} mt-[8px] flex h-[23px] shrink-0 items-end text-[12.7px] text-black`}>
            <div className="flex h-[23px] w-[85px] items-center bg-[#fbfbfb] pb-[2px] pl-[7px]">Sélectionner</div>
            <div className="flex h-[21px] w-[48px] items-center border border-b-0 border-[#e6e6e6] pl-[4px] tracking-[-0.5px]">Édition</div>
            <div className="flex h-[21px] w-[77px] items-center border border-b-0 border-l-0 border-[#e6e6e6] pl-[7px] tracking-[-0.25px]">Statistiques</div>
          </div>
          <div className="ml-[3px] flex h-[35px] shrink-0 items-center border-t border-b border-t-[#e8e8e8] border-b-[#8f8f8f] pl-[4px]">
            <div className="flex h-6 w-[31px] items-center justify-center border-r border-b border-[#b4b4b4]">
              <svg viewBox="0 0 18 14" className="h-[14px] w-[18px]" fill="none" stroke="#000" strokeWidth="1.2">
                <path d="M.6 1.6H4V5H.6ZM.6 9H4V12.4H.6ZM6.5 1.6H12M6.5 4.5H12M6.5 9H12M6.5 12H12" />
                <path d="M14 6.5H18L16 9Z" fill="#000" stroke="none" />
              </svg>
            </div>
            <div className="ml-[7px] flex h-6 w-[26px] items-center justify-center border-r border-b border-[#b4b4b4]">
              <svg viewBox="0 0 18 17" className="h-[17px] w-[18px]" fill="#fff" stroke="#000" strokeWidth="1.5">
                <path d="M3 8V16H15V8M1 9L9 1L17 9M13 4V1" />
                <path d="M6.5 16V9.5H11.5V16Z" fill="#000" />
              </svg>
            </div>
            <div className="flex h-6 w-[16px] items-start justify-center border-r border-b border-[#b4b4b4] pt-[6px]">
              <svg viewBox="0 0 12 7" className="h-[7px] w-3">
                <path d="M0 0H12L6 7Z" />
              </svg>
            </div>
            <div className="ml-[4px] flex h-6 w-[277px] border border-[#8b8b8b] bg-white">
              <span className="flex-1 border-r border-black pl-[2px] font-['Liberation_Sans',Arial,sans-serif] text-[11.5px] leading-[15px] tracking-[-0.35px] text-[#6f6f6f]">3D Warehouse</span>
              <svg viewBox="0 0 20 22" className="h-[22px] w-[20px]" fill="none" stroke="#222" strokeWidth="1.5">
                <circle cx="11.5" cy="9.5" r="3.7" />
                <path d="M8.7 12.3L4.5 16.5" />
              </svg>
            </div>
            <div className="ml-[3px] flex h-6 w-[23px] items-center justify-center border-b border-[#b4b4b4]">
              <DetailArrow />
            </div>
          </div>
          <div className="ml-[3px] h-[233px] shrink-0 border-b border-[#8f8f8f] bg-white pt-[10px] pl-[4px]">
            <Folder label="Formation sur les composants dynamiques" />
            <Folder label="Échantillon de composants" />
          </div>
          <div className="ml-[3px] flex h-[25px] shrink-0 items-center bg-[#f6f6f6]">
            <svg viewBox="0 0 13 13" className="mx-[6px] size-[13px]" fill="none" stroke="#777" strokeWidth="1.2">
              <path d="M12 4.5V8.5H7V12L1 6.5L7 1V4.5Z" />
            </svg>
            <div className={`${TAH} h-full flex-1 bg-white pt-[2px] text-center text-[12.5px] leading-[18px] text-[#666]`}>Composants</div>
            <svg viewBox="0 0 13 13" className="mx-[5px] size-[13px]" fill="none" stroke="#777" strokeWidth="1.2">
              <path d="M1 4.5V8.5H6V12L12 6.5L6 1V4.5Z" />
            </svg>
          </div>
          <div className="mt-[2px] mb-px h-[3px] shrink-0 border-t border-b border-[#b0b0b0]" />
          <Header title="Styles" />
          <Header title="Balises" open />
          <div className="flex h-[35px] shrink-0 items-center pb-[4px] pl-[8px]">
            <svg viewBox="0 0 16 16" className="size-4" fill="none" stroke="#444" strokeWidth="1.2">
              <circle cx="8" cy="8" r="7.2" />
              <path d="M8 4V12M4 8H12" />
            </svg>
            <svg viewBox="0 0 22 19" className="ml-[9px] h-[19px] w-[22px]" fill="none" stroke="#444" strokeWidth="1.2">
              <path d="M11 15.5H1V1.5H8L10 4.5H19V9" />
              <circle cx="16.5" cy="13.5" r="5" />
              <path d="M16.5 10.7V16.3M13.7 13.5H19.3" />
            </svg>
            <div className={`${TAH} ml-[8px] h-[24px] w-[239px] border border-[#e6e6e6] border-b-[#777] bg-white pl-[4px] text-[12.6px] leading-[20px] text-[#555]`}>Rechercher</div>
            <svg viewBox="0 0 20 20" className="ml-[12px] size-[19px]" fill="none" stroke="#333" strokeWidth="1.1">
              <path d="M3.5 16.5L3 10L12 1.5L19 7.5L11.5 16ZM.5 19.5L5.5 14" />
              <circle cx="6.2" cy="13.2" r="1.5" />
            </svg>
            <svg viewBox="0 0 20 21" className="ml-[10px] h-[21px] w-[19px]" stroke="#333" strokeWidth="1" strokeLinejoin="round">
              <path d="M8 12.5L11.5 20L18.5 13L18 5.5L15.5 3Z" fill="#fff" />
              <path d="M6 12.5L10.5 18L17.5 11L17 4Z" fill="#fff" />
              <path d="M1 8L8 1L14.5 .5L15.5 6L8 14L1.5 10Z" fill="#34324a" />
            </svg>
            <div className="ml-[11px]">
              <DetailArrow />
            </div>
          </div>
          <div className={`${TAH} flex h-[27px] shrink-0 border-b border-[#b5b5b5] text-[12.6px] leading-[27px] text-[#111]`}>
            <div className="w-[40px] border-r border-[#b0b0b0]" />
            <div className="flex w-[179px] items-center justify-between border-r border-[#b0b0b0] pr-[9px] pl-[5px]">
              <span>Nom</span>
              <svg viewBox="0 0 12 7" className="h-[7px] w-3" fill="none" stroke="#111" strokeWidth="1.6">
                <path d="M1 6L6 1L11 6" />
              </svg>
            </div>
            <div className="w-[40px] border-r border-[#b0b0b0]" />
            <div className="w-[95px] border-r border-[#b0b0b0] pl-[5px]">Dashes</div>
            <div className="flex-1 border-r border-[#b0b0b0]" />
          </div>
          <div className="flex h-[169px] shrink-0 pt-px">
            <div className="h-full w-[374px] overflow-hidden bg-white">
              {tags.map((t) => (
                <div key={t.name} className={`${TAH} flex h-[22px] items-center text-[12.6px] leading-[22px] ${t.sel ? "w-[373px] bg-[#0078d7] text-white" : t.on ? "text-black" : "text-[#bdbdbd]"}`}>
                  <div className="w-[41px] pl-[11px]">
                    <EyeGlyph open={t.on} />
                  </div>
                  <span className="w-[190px]">{t.name}</span>
                  <span className="size-5" style={{ backgroundColor: t.color }} />
                  <span className="ml-[13px]">Par défaut</span>
                </div>
              ))}
            </div>
            <div className="mt-[25px] ml-[7px] h-[21px] w-[6px] bg-[#868686]" />
          </div>
          <div className="mt-[7px] ml-[21px] h-[6px] w-[313px] shrink-0 bg-[#868686]" />
          <div className="h-[9px] shrink-0" />
          <Splitter />
          <Header title="Ombres" />
          <Header title="Scènes" />
          <Header title="Instructeur" />
          <div className="flex-1 bg-[#f3f6fc]" />
        </div>
        <div className="flex flex-1 flex-col justify-end pb-[20px] pl-[8px]">
          <div className="h-[21px] w-[6px] bg-[#868686]" />
        </div>
      </div>
    </aside>
  );
}

/* ---------- Window ---------- */

const menus = [
  ["Fichier", "w-[62px]"],
  ["Édition", "w-[64.5px]"],
  ["Affichage", "w-[81.5px]"],
  ["Caméra", "w-[69.5px]"],
  ["Dessiner", "w-[73.5px]"],
  ["Outils", "w-[56px]"],
  ["Fenêtre", "w-[67px]"],
  ["Extensions", "w-[87px]"],
  ["Aide", "w-[40px]"],
];

export default function App() {
  return (
    <div className="flex h-[1019px] w-[1920px] flex-col overflow-hidden bg-white">
      <header className="flex h-[28px] shrink-0 items-center pl-[2px]">
        <svg viewBox="0 0 20 20" className="size-5" fill="none">
          <rect x=".5" y=".5" width="19" height="19" fill="#e6f1f8" stroke="#9bb9cc" />
          <path d="M4 6.5C4 3 15 2 16.5 6.5V11.5C16 14.5 12 16 9.5 16.5" stroke="#1676b5" strokeWidth="2" />
          <path d="M4 8.5C8 6.5 12 6.5 12.5 9V12.5M4 11C7 9 9 10 9 11.5V15M4 8.5V12.5L8 15M7 5.5C11 4.5 14.5 6 14.5 8.5" stroke="#0f6aa8" strokeWidth="1.8" />
        </svg>
        <span className={`${UI} ml-[5px] flex-1 pt-px text-[14.4px] tracking-[-0.08px] text-black`}>garage v3.2.skp - SketchUp Pro 2022</span>
        <svg viewBox="0 0 140 20" className="mr-[20px] h-5 w-[140px]" fill="none" stroke="#111" strokeWidth="1.2">
          <path d="M5.5 9.5H17" />
          <rect x="63.5" y="7" width="9" height="8.5" rx="1.5" />
          <path d="M66 4.8H72.5Q74.8 4.8 74.8 7V13" />
          <path d="M122.5 4.5L133.5 15.5M133.5 4.5L122.5 15.5" />
        </svg>
      </header>
      <nav className={`${UI} flex h-[26px] shrink-0 items-center pl-[9px] text-[14px] text-black [font-variant-ligatures:none]`}>
        {menus.map(([label, width]) => (
          <span key={label} className={`${width} ${label === "Affichage" ? "tracking-[0.15px]" : ""}`}>
            {label}
          </span>
        ))}
      </nav>
      <div className="flex h-[933px] shrink-0">
        <Toolbar />
        <main className="w-[1412px] shrink-0 overflow-hidden border-t-2 border-l-[3px] border-t-[#7d8183] border-l-[#8f8f8f] bg-[#f6f6f6]">
          <Model />
        </main>
        <Tray />
      </div>
      <footer className={`${UI} flex h-8 flex-1 items-center border-t border-[#e0e0e0] bg-[#f0f0f0] pt-px pl-[7px] text-[15px] text-[#1c1c1c]`}>
        <svg viewBox="0 0 18 18" className="size-[18px]">
          <circle cx="9" cy="9" r="8" fill="none" stroke="#9a9a9a" strokeWidth="1.2" />
          <path d="M9 15L5.5 8A3.6 3.6 0 1 1 12.5 8Z" fill="#9a9a9a" />
        </svg>
        <svg viewBox="0 0 18 18" className="ml-[17px] size-[18px]">
          <circle cx="9" cy="9" r="8" fill="none" stroke="#111" strokeWidth="1.4" />
          <circle cx="9" cy="4.8" r="1.6" />
          <path d="M6 7H12V8.8H10.4V14.5H7.6V8.8H6Z" />
        </svg>
        <div className="ml-[12px] h-[14px] w-px bg-[#777]" />
        <span className="ml-[10px] w-[1503px] tracking-[0.03px]">Cliquez ou faites glisser pour sélectionner des objets. Maj = Ajouter/Soustraire. Ctrl = Ajouter. Maj + Ctrl = Soustraire.</span>
        <div className="h-[14px] w-px bg-[#777]" />
        <span className="ml-[10px] w-[68px]">Mesures</span>
        <div className="h-6 w-[250px] border border-[#b3bfd2] bg-[#eff0f2]" />
      </footer>
    </div>
  );
}
